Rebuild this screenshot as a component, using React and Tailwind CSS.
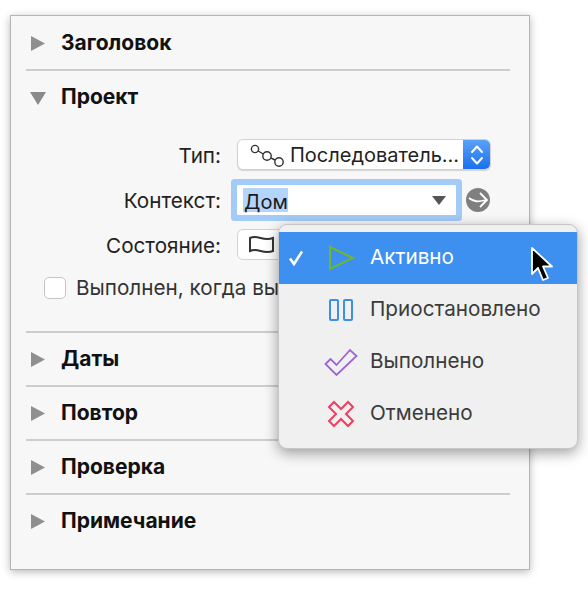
const FONT = "font-['Inter',sans-serif]";

function Tri({ open }) {
  return (
    <svg width="16" height="17" viewBox="0 0 16 17" className="shrink-0">
      {open ? <polygon points="0,3 16,3 8,16" fill="#8a8a8a" /> : <polygon points="1,1 15,8.5 1,16" fill="#8f8f8f" />}
    </svg>
  );
}

function Header({ title, open }) {
  return (
    <div className="h-[52px] flex items-center pl-[19px]">
      <div className="w-[31px] flex"><Tri open={open} /></div>
      <span className="text-[21px] font-bold text-[#111] leading-none pb-[2px]">{title}</span>
    </div>
  );
}

const Sep = () => <div className="h-[2px] ml-[15px] mr-[19px] bg-[#cdcdcd]" />;

function Label({ children }) {
  return <div className="w-[210px] pt-[3px] text-right text-[20.7px] text-[#222] leading-none">{children}</div>;
}

function MenuItem({ icon, label, active, check }) {
  return (
    <div className={`h-[52px] flex items-center text-[20.7px] ${active ? "bg-[#3d8ff0] text-white" : "text-[#3b3b3b]"}`}>
      <div className="w-[37px] pl-[9px] flex items-center">
        {check && (
          <svg width="16" height="16" viewBox="0 0 16 16" fill="none" stroke="#fff" strokeWidth="2.6">
            <path d="M2 8.5 L6 14 L14 1.5" />
          </svg>
        )}
      </div>
      <div className="w-[49px] flex justify-center">{icon}</div>
      <span className="ml-[5px] leading-none pb-[2px]">{label}</span>
    </div>
  );
}

export default function App() {
  return (
    <div className={`w-[588px] h-[610px] bg-white pt-[15px] pl-[10px] relative overflow-hidden ${FONT}`}>
      <div className="w-[520px] h-[555px] bg-[#f7f7f7] border border-[#b4b4b4] pt-[1px] shadow-[0_2px_8px_rgba(0,0,0,0.28)]">
        <Header title="Заголовок" />
        <Sep />
        <Header title="Проект" open />
        <div className="h-[208px] pt-[16px] flex flex-col">
          <div className="flex items-center gap-[16px] h-[31px]">
            <Label>Тип:</Label>
            <div className="w-[254px] h-[31px] flex rounded-[6px] bg-white border border-[#d2d2d2] shadow-[0_1px_1px_rgba(0,0,0,0.15)] overflow-hidden">
              <div className="flex-1 flex items-center pl-[12px] gap-[4px] min-w-0">
                <svg width="36" height="24" viewBox="0 0 36 24" className="shrink-0" fill="none" stroke="#333" strokeWidth="1.4">
                  <circle cx="5" cy="6" r="3.6" />
                  <circle cx="17" cy="13" r="4.2" />
                  <circle cx="29" cy="19" r="4.2" />
                  <path d="M8.2 8 L13.3 11 M21 15 L25 17" />
                </svg>
                <span className="text-[20px] text-[#222] leading-none whitespace-nowrap">Последователь...</span>
              </div>
              <div className="w-[27px] bg-[linear-gradient(#5aa2f7,#1a70ee)] flex items-center justify-center">
                <svg width="14" height="24" viewBox="0 0 14 24" fill="none" stroke="#fff" strokeWidth="2" strokeLinecap="round" strokeLinejoin="round">
                  <path d="M2 9 L7 3.5 L12 9 M2 15 L7 20.5 L12 15" />
                </svg>
              </div>
            </div>
          </div>

          <div className="flex items-center gap-[16px] h-[30px] mt-[15px]">
            <Label>Контекст:</Label>
            <div className="w-[219px] h-[30px] bg-white shadow-[0_0_0_6px_#a3cbf7] rounded-[1px] flex items-center pl-[6px] pr-[10px]">
              <span className="bg-[#b3d4fb] text-[20px] text-[#1a1a1a] h-[24px] leading-[28px] px-[1px] w-[45px]">Дом</span>
              <svg width="14" height="9" viewBox="0 0 14 9" className="ml-auto"><polygon points="0,0 14,0 7,9" fill="#555" /></svg>
            </div>
            <svg width="26" height="26" viewBox="0 0 26 26" className="-ml-[7px]">
              <circle cx="13" cy="13" r="12" fill="#7f7f7f" />
              <path d="M4 11 C9 15 13 15 21 13 M15 6 L22 13 L15 20" fill="none" stroke="#fff" strokeWidth="1.8" />
            </svg>
          </div>

          <div className="flex items-center gap-[16px] h-[31px] mt-[14px]">
            <Label>Состояние:</Label>
            <div className="w-[254px] h-[31px] rounded-[6px] bg-white border border-[#d2d2d2] flex items-center pl-[10px]">
              <svg width="27" height="20" viewBox="0 0 27 20" fill="none" stroke="#333" strokeWidth="2">
                <path d="M2 3 C10 -1 15 7 25 3 V16 C15 20 10 12 2 16 Z" />
              </svg>
            </div>
          </div>

          <div className="flex items-center h-[22px] mt-[17px] pl-[33px]">
            <div className="w-[22px] h-[22px] rounded-[5px] bg-white border border-[#c4c4c4] shrink-0" />
            <span className="ml-[10px] text-[20.7px] text-[#333] leading-none whitespace-nowrap">Выполнен, когда выполнены все</span>
          </div>
        </div>
        <Sep />
        <Header title="Даты" />
        <Sep />
        <Header title="Повтор" />
        <Sep />
        <Header title="Проверка" />
        <Sep />
        <Header title="Примечание" />
      </div>

      <div className="absolute left-[278px] top-[224px] w-[300px] h-[225px] bg-[#f0f0f0] rounded-[9px] border border-[#c6c6c6] pt-[7px] shadow-[0_4px_14px_rgba(0,0,0,0.38)] overflow-hidden">
        <MenuItem active check label="Активно" icon={
          <svg width="28" height="26" viewBox="0 0 28 26" fill="none" stroke="#6fb82e" strokeWidth="2" className="ml-[3px]"><polygon points="2,2 25,13 2,24" /></svg>
        } />
        <MenuItem label="Приостановлено" icon={
          <svg width="24" height="22" viewBox="0 0 24 22" fill="none" stroke="#3b8eea" strokeWidth="2"><rect x="1" y="1" width="8" height="20" rx="1" /><rect x="15" y="1" width="8" height="20" rx="1" /></svg>
        } />
        <MenuItem label="Выполнено" icon={
          <svg width="34" height="28" viewBox="0 0 34 28" fill="none" stroke="#a063d6" strokeWidth="1.8" strokeLinejoin="miter"><polygon points="1.5,16 6.5,11 12.5,17 26,2 32.5,8 12.5,27" /></svg>
        } />
        <MenuItem label="Отменено" icon={
          <svg width="28" height="28" viewBox="0 0 28 28" fill="none" stroke="#ef3f5f" strokeWidth="2"><polygon points="7,2 14,9 21,2 26,7 19,14 26,21 21,26 14,19 7,26 2,21 9,14 2,7" /></svg>
        } />
      </div>

      <svg width="26" height="38" viewBox="0 0 26 38" className="absolute left-[529px] top-[246px]">
        <polygon points="3,2 3,28 9,22 14,34 19,32 14,20.5 23,20.5" fill="#000" stroke="#fff" strokeWidth="1.8" strokeLinejoin="round" />
      </svg>
    </div>
  );
}
